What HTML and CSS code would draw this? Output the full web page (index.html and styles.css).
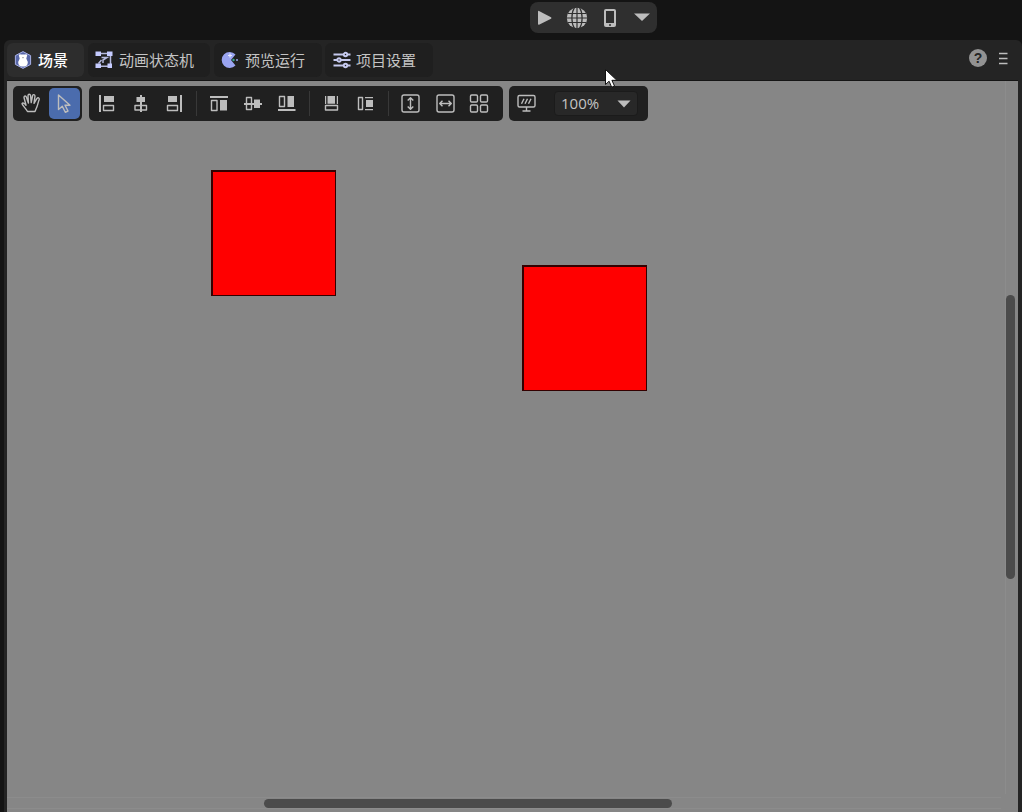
FILE: index.html
```html
<!DOCTYPE html>
<html lang="zh-CN">
<head>
<meta charset="utf-8">
<title>场景</title>
<link rel="stylesheet" href="styles.css">
</head>
<body>
<header class="topbar">
  <div class="run-group">
    <svg class="run-icon" viewBox="0 0 24 24"><path class="solid" d="M5 5.500Q5 4.500 6 5l12 6.200q1 .8 0 1.600l-12 6q-1 .2-1-.8z"/></svg>
    <svg class="run-icon" viewBox="0 0 24 24"><circle class="solid" cx="12" cy="12" r="10.200"/><path class="cut" d="M12 1v22M1 12h22M3 7.500h18M3 16.500h18M9.500 1.500C6 7 6 17 9.500 22.500M14.500 1.500C18 7 18 17 14.500 22.500"/></svg>
    <svg class="run-icon" viewBox="0 0 24 24"><rect class="solid" x="6" y="3" width="12" height="18" rx="2"/><rect class="hole" x="8" y="5" width="8" height="12"/><circle class="hole" cx="12" cy="19" r="1"/></svg>
    <svg class="run-icon" viewBox="0 0 24 24"><path class="solid" d="M4 7.500h16l-8 7.500z"/></svg>
  </div>
</header>
<main class="panel">
  <nav class="tabs">
    <div class="tab tab-scene active">
      <svg class="tab-icon" viewBox="0 0 18 18"><path d="M9 .6l7.600 4v8.800L9 17.400l-7.600-4V4.600z" fill="#5867a8" stroke="#a9b2e6"/><path d="M4.800 4.200Q5.500 2.500 7 3.500h4Q12.500 2.500 13.200 4.200L12.300 7.500l1.500 3.500q0 4-3.300 4.500h-3Q4.200 15 4.200 11l1.500-3.500z" fill="#fff"/><path d="M8 6.200h2L9 7.400z" fill="#777"/></svg>
      <span>场景</span>
    </div>
    <div class="tab tab-state">
      <svg class="tab-icon" viewBox="0 0 18 18"><path d="M5 2.500h8M3.500 12.500l3-3.500M4 15.200h9M15.500 4v10M6.500 6.500h5.500l-4 2.500v3" fill="none" stroke="#b5b9dc" stroke-width="1.500"/><path d="M.5 .5h5.500v4.500H.5zM12 .5h5.500v4.500H12zM.5 12.500H6V17H.5zM12.500 12.500h4.500v4.500h-4.500z" fill="#c5cbff"/></svg>
      <span>动画状态机</span>
    </div>
    <div class="tab tab-preview">
      <svg class="tab-icon" viewBox="0 0 18 18"><path d="M14.500 3.500A8 8 0 1 0 14.500 14.500L10 9z" fill="#9aa4f0"/><path d="M9 2.500v4M7 4.500h4" stroke="#e8eaff" stroke-width="1.200"/><circle cx="12.500" cy="9" r="1.200" fill="#38a890"/><circle cx="16" cy="9" r="1" fill="#9aa4f0"/></svg>
      <span>预览运行</span>
    </div>
    <div class="tab tab-settings">
      <svg class="tab-icon" viewBox="0 0 18 18"><g fill="#222" stroke="#c5c9ee" stroke-width="1.900"><path d="M.5 3.500h17M.5 9h17M.5 14.500h17"/><circle cx="12.500" cy="3.500" r="1.700"/><circle cx="6" cy="9" r="1.700"/><circle cx="12.500" cy="14.500" r="1.700"/></g></svg>
      <span>项目设置</span>
    </div>
    <div class="tab-tools">
      <span class="help">?</span>
      <svg class="menu" viewBox="0 0 10 14"><path d="M1 1.500h8.500M1 6.500h8.500M1 11.500h8.500"/></svg>
    </div>
  </nav>
  <section class="canvas">
    <div class="toolbars">
      <div class="bar bar-mode">
        <div class="mode"><svg class="icon" viewBox="0 0 24 25"><path class="line" d="M8.500 20.500C6.500 17 4 15 3 12.800c.6-1.400 2-1 4 1.400L5 6.500c0-1.800 1.800-2 2.400-.4l2 5.900L9 4.600c.2-1.800 2.200-1.800 2.600 0l.6 7 1.400-7c.5-1.500 2.300-1.200 2.400.4L15 12.400l3-5c1-1.200 2.500-.4 2.200 1-1.400 3.600-1.600 6.600-3 9.100l-1.200 3z"/></svg></div>
        <div class="mode selected"><svg class="icon" viewBox="0 0 24 25"><path class="line" d="M5.500 4v14.500l3.800-3.200 3 6 2.700-1.300-3-5.800h5z"/></svg></div>
      </div>
      <div class="bar bar-align">
        <svg class="icon" viewBox="0 0 24 25"><path class="solid" d="M4 4h2v17H4zM9 5h10v6H9z"/><path class="line" d="M8.500 14.500h10v5h-10z"/></svg>
        <svg class="icon" viewBox="0 0 24 25"><path class="solid" d="M11 4h2v17h-2zM7.500 6H16v5H7.500z"/><path class="line" d="M6 14.500h11.500V19H6z"/></svg>
        <svg class="icon" viewBox="0 0 24 25"><path class="solid" d="M17 4h2v17h-2zM5 5h9v6H5z"/><path class="line" d="M4.500 14.500h10v5h-10z"/></svg>
        <i class="sep first"></i>
        <svg class="icon" viewBox="0 0 24 25"><path class="solid" d="M3 5h18v2H3zM13 9h7v10.500h-7z"/><path class="line" d="M4.500 9.500h5.500v10H4.500z"/></svg>
        <svg class="icon" viewBox="0 0 24 25"><path class="solid" d="M3 12h18v2H3zM13 8.500h6v8.500h-6z"/><path class="line" d="M5.500 6.500h5v12h-5z"/></svg>
        <svg class="icon" viewBox="0 0 24 25"><path class="solid" d="M3 18h17.500v2H3zM12.500 5H19v11h-6.500z"/><path class="line" d="M4.500 5.500h5v10h-5z"/></svg>
        <i class="sep"></i>
        <svg class="icon" viewBox="0 0 24 25"><path class="solid" d="M5 5h1.200v8H5zM7.500 5H15v7.700H7.500zM16.800 5H18v8h-1.200z"/><path class="line" d="M5.500 14.500h12v4.500h-12z"/></svg>
        <svg class="icon" viewBox="0 0 24 25"><path class="solid" d="M11 6h8v1.200h-8zM12 9H19V16h-7zM11 18h8v1.200h-8z"/><path class="line" d="M4.500 6.500h4v12h-4z"/></svg>
        <i class="sep"></i>
        <svg class="icon" viewBox="0 0 24 25"><path class="line" d="M11.500 7v11M8.700 9.500L11.500 6.700l2.800 2.800M8.700 15.500l2.800 2.800 2.800-2.800"/><rect class="line" x="3" y="4" width="17" height="17" rx="2"/></svg>
        <svg class="icon" viewBox="0 0 24 25"><path class="line" d="M7 12.500h11M9.500 9.700L6.700 12.500l2.800 2.800M15.500 9.700l2.800 2.800-2.800 2.800"/><rect class="line" x="4" y="4" width="17" height="17" rx="2"/></svg>
        <svg class="icon" viewBox="0 0 24 25"><g class="line"><rect x="3.500" y="4" width="7" height="7" rx="1.200"/><rect x="13.500" y="4" width="7" height="7" rx="1.200"/><rect x="3.500" y="14" width="7" height="7" rx="1.200"/><rect x="13.500" y="14" width="7" height="7" rx="1.200"/></g></svg>
      </div>
      <div class="bar bar-zoom">
        <svg class="icon" viewBox="0 0 24 25"><rect class="line" x="4" y="4.500" width="17" height="11.500" rx="1.500"/><path class="line" d="M12.500 16v4M8.500 20h8M7.500 12.800l2.500-5M11 12.800l2.500-5M14.500 12.800l2.500-5"/></svg>
        <div class="select"><span>100%</span><svg class="caret" viewBox="0 0 14 8"><path class="solid" d="M.5.500h13L7 7.500z"/></svg></div>
      </div>
    </div>
    <div class="square square-a"></div>
    <div class="square square-b"></div>
    <div class="track track-v"><div class="thumb thumb-v"></div></div>
    <div class="track track-h"><div class="thumb thumb-h"></div></div>
  </section>
</main>
<svg class="cursor" viewBox="0 0 14 21"><path d="M1.500 1.500v15l3.600-3.300 2.600 6 2.800-1.200-2.600-5.700h5z"/></svg>
</body>
</html>
```
FILE: styles.css
```css
* { box-sizing: border-box; }
body {
  margin: 0;
  height: 812px;
  overflow: hidden;
  display: flex;
  flex-direction: column;
  background: #141414;
  color: #c4c4c4;
  font-family: "Noto Sans", "Noto Sans CJK SC", sans-serif;
}
svg { display: block; flex: none; }
.solid { fill: #bdbdbd; }
.line { fill: none; stroke: #bdbdbd; stroke-width: 1.4; stroke-linejoin: round; }
.cut { fill: none; stroke: #2f2f2f; stroke-width: 1.2; }
.hole { fill: #2f2f2f; }
.topbar { height: 40px; flex: none; padding: 2px 0 0 530px; }
.run-group {
  width: 127px;
  height: 31px;
  padding: 0 3px;
  display: flex;
  align-items: center;
  justify-content: space-between;
  background: #2f2f2f;
  border-radius: 8px;
}
.run-icon { width: 24px; height: 24px; }
.panel {
  flex: 1;
  margin-left: 4px;
  padding: 3px 4px 0 3px;
  display: flex;
  flex-direction: column;
  background: #242424;
  border-radius: 6px 6px 0 0;
}
.tabs { height: 38px; flex: none; display: flex; border-bottom: 1px solid #151515; }
.tab {
  height: 34px;
  margin-right: 4px;
  padding-left: 7px;
  display: flex;
  align-items: center;
  gap: 6px;
  background: #1f1f1f;
  border-radius: 6px;
  font: 15px/20px "Noto Sans CJK SC", sans-serif;
  white-space: nowrap;
}
.tab-icon { width: 18px; height: 18px; }
.tab-scene { width: 77px; }
.tab-state { width: 122px; }
.tab-preview { width: 108px; margin-right: 3px; }
.tab-settings { width: 108px; padding-left: 8px; gap: 5px; }
.tab.active { background: #2d2d2d; color: #fff; font-weight: 500; }
.tab-tools { margin-left: auto; padding: 6px 10px 0 0; display: flex; gap: 11px; }
.help {
  width: 18px;
  height: 18px;
  border-radius: 50%;
  background: #929292;
  color: #242424;
  font: bold 14px/18px "Liberation Sans", sans-serif;
  text-align: center;
}
.menu { width: 10px; height: 14px; margin-top: 3px; fill: none; stroke: #bdbdbd; stroke-width: 1.4; }
.canvas { flex: 1; position: relative; background: #868686; }
.toolbars { padding: 5px 6px 0; display: flex; }
.bar { height: 35px; display: flex; align-items: center; background: #202020; border-radius: 5px; }
.icon { width: 24px; height: 25px; }
.bar-mode { width: 69px; padding: 0 2px; gap: 3px; margin-right: 7px; }
.mode { width: 31px; height: 31px; display: grid; place-items: center; border-radius: 5px; }
.mode.selected { background: #4b6cad; }
.bar-align { width: 414px; padding-left: 6px; gap: 10px; margin-right: 6px; }
.sep { width: 1px; height: 25px; background: #383838; }
.sep.first { margin-left: -1px; }
.bar-zoom { width: 139px; padding: 0 10px 0 5px; justify-content: space-between; }
.select {
  width: 84px;
  height: 25px;
  padding: 0 6px;
  display: flex;
  align-items: center;
  justify-content: space-between;
  background: #282828;
  border: 1px solid #1b1b1b;
  border-radius: 4px;
  font: 15px/23px "Open Sans", sans-serif;
}
.caret { width: 14px; height: 8px; }
.square {
  position: absolute;
  width: 125px;
  height: 126px;
  background: #f00;
  border: solid #300;
  border-width: 2px 1px 1px 2px;
}
.square-a { left: 204px; top: 89px; }
.square-b { left: 515px; top: 184px; }
.track { position: absolute; border: 1px solid #8c8c8c; }
.track-v { right: 2px; top: 0; width: 11px; height: 713px; border-width: 0 0 0 1px; }
.track-h { left: 0; bottom: 3px; width: 994px; height: 12px; border-width: 1px 0; }
.thumb { position: absolute; background: #4b4b4b; border-radius: 5px; }
.thumb-v { left: 0; top: 214px; width: 9px; height: 284px; }
.thumb-h { left: 257px; top: 1px; width: 408px; height: 9px; }
.cursor { position: absolute; left: 604px; top: 68px; width: 14px; height: 21px; fill: #fff; stroke: #111; stroke-width: 1; }
```
